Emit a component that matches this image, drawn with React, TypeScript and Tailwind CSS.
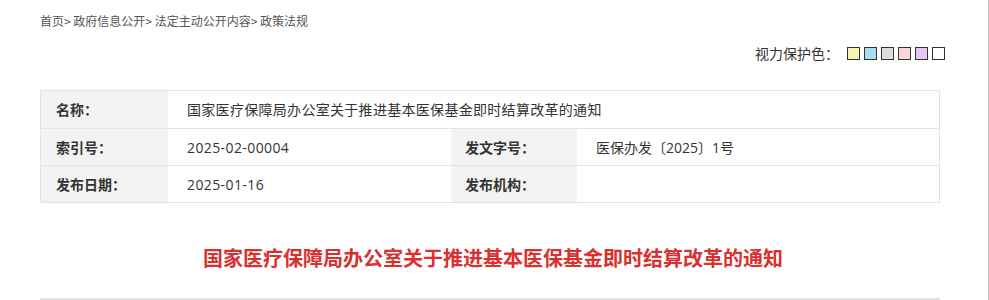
import React from "react";

const font = { fontFamily: '"Noto Sans CJK SC", "Microsoft YaHei", sans-serif' };
const numFont = { fontFamily: '"Open Sans", "Noto Sans CJK SC", sans-serif' };

export default function App() {
  const swatches = ["#f7f3b2", "#a9dcf1", "#dddddd", "#f9d5dc", "#e3c9f6", "#ffffff"];
  return (
    <div className="w-[989px] h-[300px] bg-white border-r border-[#c8c8c8] overflow-hidden" style={font}>
      <div className="w-[900px] ml-[40px]">
        <div className="pt-[11px] h-[20px] text-[12px] leading-[20px] text-[#555]">
          首页&gt; 政府信息公开&gt; 法定主动公开内容&gt; 政策法规
        </div>
        <div className="flex justify-end items-center mt-[23px] h-[20px] mr-[-5px]">
          <span className="text-[14px] text-[#333] mr-[8px]">视力保护色：</span>
          <div className="flex gap-[4px]">
            {swatches.map((c) => (
              <span key={c} className="w-[13px] h-[13px] border border-[#333] block" style={{ backgroundColor: c }} />
            ))}
          </div>
        </div>
        <div className="mt-[27px] border border-[#e3e3e3] text-[14px] text-[#333]">
          <div className="flex h-[37px]">
            <div className="w-[127px] bg-[#f3f3f3] pl-[15px] flex items-center font-bold">名称：</div>
            <div className="flex-1 pl-[19px] flex items-center tracking-[0.3px]">国家医疗保障局办公室关于推进基本医保基金即时结算改革的通知</div>
          </div>
          <div className="flex h-[37px] border-t border-[#e3e3e3]">
            <div className="w-[127px] bg-[#f3f3f3] pl-[15px] flex items-center font-bold">索引号：</div>
            <div className="w-[283px] pl-[19px] flex items-center tracking-[0.4px]" style={numFont}>2025-02-00004</div>
            <div className="w-[126px] bg-[#f3f3f3] pl-[14px] flex items-center font-bold">发文字号：</div>
            <div className="flex-1 pl-[19px] flex items-center" style={numFont}>医保办发〔2025〕1号</div>
          </div>
          <div className="flex h-[37px] border-t border-[#e3e3e3]">
            <div className="w-[127px] bg-[#f3f3f3] pl-[15px] flex items-center font-bold">发布日期：</div>
            <div className="w-[283px] pl-[19px] flex items-center tracking-[0.4px]" style={numFont}>2025-01-16</div>
            <div className="w-[126px] bg-[#f3f3f3] pl-[14px] flex items-center font-bold">发布机构：</div>
            <div className="flex-1 pl-[19px] flex items-center"></div>
          </div>
        </div>
        <div className="mt-[40px] text-center text-[20px] font-bold text-[#d9312f] leading-[30px] pl-[6px]">
          国家医疗保障局办公室关于推进基本医保基金即时结算改革的通知
        </div>
        <div className="mt-[25px] border-t-2 border-[#e2e2e2]" />
      </div>
    </div>
  );
}
